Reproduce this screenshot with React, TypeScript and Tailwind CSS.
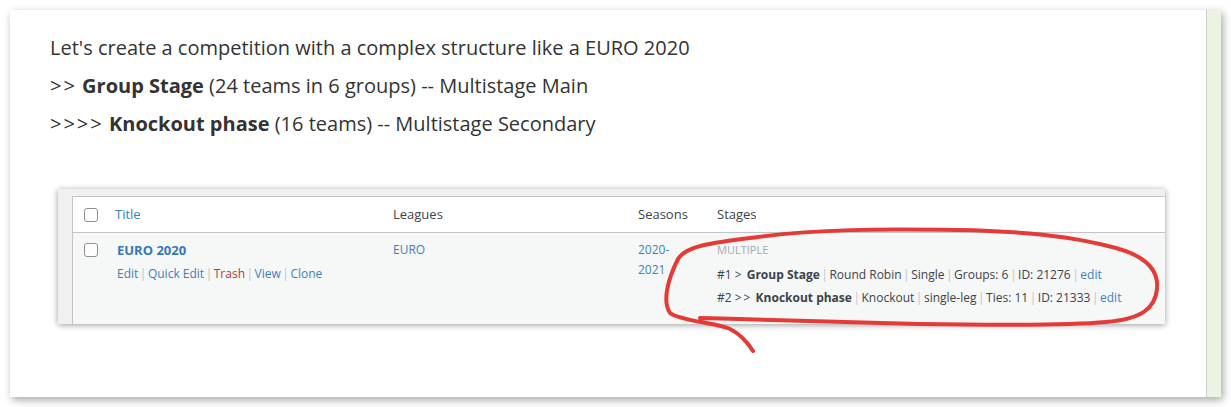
import React from "react";

const sans = { fontFamily: '"Open Sans", "Noto Sans", sans-serif' };

const Checkbox = () => (
  <span className="block w-[14px] h-[14px] rounded-[3px] border border-[#8c8f94] bg-white" />
);

const Sep = () => <span className="text-[#c3c4c7] px-[1.5px]">|</span>;

const Arrows = ({ n }: { n: number }) => (
  <span className="tracking-[2px]">{">".repeat(n)}</span>
);

const Outline = () => (
  <svg
    className="absolute left-0 top-0 pointer-events-none overflow-visible"
    width="1107"
    height="170"
    viewBox="0 0 1107 170"
    fill="none"
  >
    <path
      d="M642 129 C720 131 800 134 860 135 S1005 137 1048 133 C1083 130 1097 120 1099 100 C1101 80 1086 65 1050 57 C1012 47 960 42 900 41 C820 40 760 40 700 48 C660 53 628 56 620 70 C610 90 604 112 612 124 C622 132 660 134 672 140 C684 146 690 154 695 162"
      stroke="#e53a36"
      strokeWidth="4"
      strokeLinecap="round"
      strokeLinejoin="round"
    />
  </svg>
);

const StagesTable = () => (
  <div className="relative ml-[48px] w-[1107px] h-[135px] bg-[#f0f0f1] pt-[7px] pl-[14px] shadow-[0_1px_6px_rgba(0,0,0,0.4)]">
    <div className="h-full border-l border-t border-[#c3c4c7] text-[13px] text-[#3c434a]" style={sans}>
      {/* header */}
      <div className="flex items-center h-[36px] bg-white border-b border-[#c3c4c7]">
        <div className="w-[42px] pl-[11px]">
          <Checkbox />
        </div>
        <div className="w-[278px] text-[#3d80c2]">Title</div>
        <div className="w-[245px]">Leagues</div>
        <div className="w-[79px]">Seasons</div>
        <div>Stages</div>
      </div>
      {/* row */}
      <div className="flex h-[91px] bg-[#f6f7f7] pt-[8px]">
        <div className="w-[42px] pl-[11px] pt-[2px]">
          <Checkbox />
        </div>
        <div className="w-[278px] pl-[2px]">
          <div className="font-bold text-[#3577b8] leading-[18px]">EURO 2020</div>
          <div className="mt-[7px] text-[12px] text-[#3d80c2] leading-[16px]">
            Edit<Sep />Quick Edit<Sep />
            <span className="text-[#b83537]">Trash</span>
            <Sep />View<Sep />Clone
          </div>
        </div>
        <div className="w-[245px] text-[12px] text-[#3d80c2] leading-[18px]">EURO</div>
        <div className="w-[79px] text-[12px] text-[#3d80c2] leading-[20px] -mt-[1px]">
          2020-
          <br />
          2021
        </div>
        <div className="text-[12px] leading-[23px] -mt-[3px]">
          <div className="text-[11px] text-[#a7aaad]">MULTIPLE</div>
          <div className="mt-[2px]">
            #1 <Arrows n={1} /> <b>Group Stage</b>
            <Sep />Round Robin<Sep />Single<Sep />Groups: 6<Sep />ID: 21276<Sep />
            <span className="text-[#3d80c2]">edit</span>
          </div>
          <div>
            #2 <Arrows n={2} /> <b>Knockout phase</b>
            <Sep />Knockout<Sep />single-leg<Sep />Ties: 11<Sep />ID: 21333<Sep />
            <span className="text-[#3d80c2]">edit</span>
          </div>
        </div>
      </div>
    </div>
    <Outline />
  </div>
);

export default function App() {
  return (
    <div className="w-[1231px] h-[407px] bg-white p-[10px]">
      <div className="flex h-[387px] bg-white shadow-[2px_3px_8px_rgba(0,0,0,0.35)]">
        <div className="flex-1 pt-[19px]">
          <div className="pl-[40px] text-[20px] leading-[38px] text-[#333333]" style={sans}>
            <p>Let's create a competition with a complex structure like a EURO 2020</p>
            <p>
              <Arrows n={2} /> <b>Group Stage</b> (24 teams in 6 groups) -- Multistage Main
            </p>
            <p>
              <Arrows n={4} /> <b>Knockout phase</b> (16 teams) -- Multistage Secondary
            </p>
          </div>
          <div className="mt-[46px]">
            <StagesTable />
          </div>
        </div>
        <div className="w-[15px] bg-[#edf3e4] border-l border-[#cfd3cb]" />
      </div>
    </div>
  );
}
